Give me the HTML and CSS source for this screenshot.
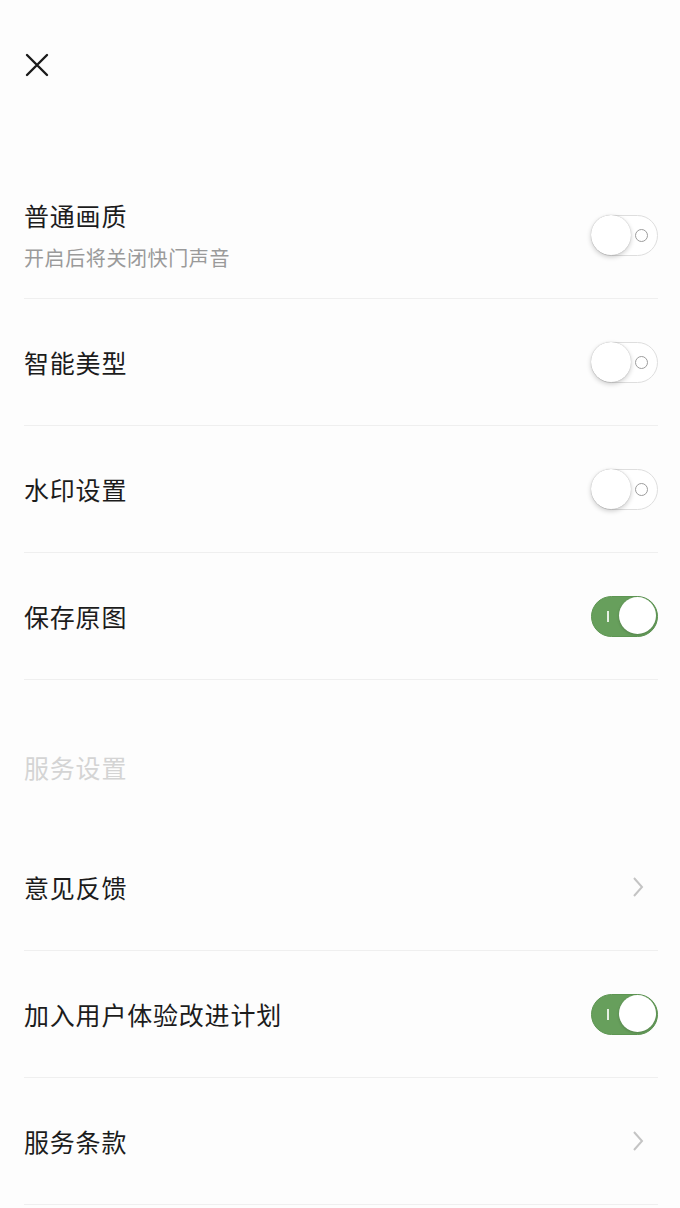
FILE: index.html
```html
<!DOCTYPE html>
<html lang="zh">
<head>
<meta charset="utf-8">
<link rel="stylesheet" href="styles.css">
</head>
<body>
<div class="page">
  <header class="topbar">
    <svg class="close" width="24" height="24" viewBox="0 0 24 24"><path d="M2 2 L22 22 M22 2 L2 22" stroke="#1a1a1a" stroke-width="2.4" stroke-linecap="round" fill="none"/></svg>
  </header>
  <div class="list">
    <div class="row">
      <div class="label">
        <div class="title">普通画质</div>
        <div class="sub">开启后将关闭快门声音</div>
      </div>
      <div class="toggle off"><span class="knob"></span><span class="ring"></span></div>
    </div>
    <div class="row">
      <div class="label"><div class="title">智能美型</div></div>
      <div class="toggle off"><span class="knob"></span><span class="ring"></span></div>
    </div>
    <div class="row">
      <div class="label"><div class="title">水印设置</div></div>
      <div class="toggle off"><span class="knob"></span><span class="ring"></span></div>
    </div>
    <div class="row">
      <div class="label"><div class="title">保存原图</div></div>
      <div class="toggle on"><span class="bar"></span><span class="knob"></span></div>
    </div>
  </div>
  <div class="section">服务设置</div>
  <div class="list">
    <div class="row">
      <div class="label"><div class="title">意见反馈</div></div>
      <svg class="chev" width="14" height="22" viewBox="0 0 14 22"><path d="M3 2 L11 11 L3 20" stroke="#c4c4c4" stroke-width="2" fill="none"/></svg>
    </div>
    <div class="row">
      <div class="label"><div class="title">加入用户体验改进计划</div></div>
      <div class="toggle on"><span class="bar"></span><span class="knob"></span></div>
    </div>
    <div class="row">
      <div class="label"><div class="title">服务条款</div></div>
      <svg class="chev" width="14" height="22" viewBox="0 0 14 22"><path d="M3 2 L11 11 L3 20" stroke="#c4c4c4" stroke-width="2" fill="none"/></svg>
    </div>
  </div>
</div>
</body>
</html>
```
FILE: styles.css
```css
html, body {
  margin: 0;
  padding: 0;
  background: #fdfdfd;
}
body {
  font-family: "Noto Sans CJK SC", "Noto Sans", sans-serif;
  color: #1c1c1c;
}
.page {
  width: 680px;
  height: 1208px;
  overflow: hidden;
}
.topbar {
  height: 172px;
  box-sizing: border-box;
  padding: 53px 0 0 25px;
}
.close {
  display: block;
}
.list {
  padding: 0 22px 0 24px;
}
.row {
  height: 126px;
  border-bottom: 1px solid #efefef;
  display: flex;
  align-items: center;
  justify-content: space-between;
}
.title {
  font-size: 25px;
  line-height: 32px;
  letter-spacing: 0.8px;
}
.sub {
  font-size: 20px;
  line-height: 26px;
  color: #9a9a9a;
  margin-top: 14px;
  letter-spacing: 0.6px;
}
.section {
  height: 144px;
  box-sizing: border-box;
  padding: 71px 0 0 24px;
  font-size: 25px;
  line-height: 32px;
  color: #d4d4d4;
  letter-spacing: 0.8px;
}
.toggle {
  position: relative;
  width: 67px;
  height: 41px;
  border-radius: 21px;
  box-sizing: border-box;
  flex: none;
}
.toggle.off {
  background: #fff;
  border: 1.5px solid #dedede;
}
.toggle.off .knob {
  position: absolute;
  left: -1px;
  top: -1px;
  width: 40px;
  height: 40px;
  border-radius: 50%;
  background: #fff;
  box-shadow: 0 2px 5px rgba(0,0,0,0.2), 0 0 1px rgba(0,0,0,0.3);
}
.toggle .ring {
  position: absolute;
  right: 9px;
  top: 13px;
  width: 11px;
  height: 11px;
  border-radius: 50%;
  border: 1.5px solid #9c9c9c;
}
.toggle.on {
  background: #679f5c;
  border: 1.5px solid #5e9653;
}
.toggle.on .knob {
  position: absolute;
  right: 1px;
  top: 0.5px;
  width: 37px;
  height: 37px;
  border-radius: 50%;
  background: #fff;
  box-shadow: 0 1px 3px rgba(0,0,0,0.2);
}
.toggle .bar {
  position: absolute;
  left: 15px;
  top: 14px;
  width: 2px;
  height: 11px;
  background: #e6f0e3;
}
.chev {
  display: block;
  margin-right: 13px;
}
```
